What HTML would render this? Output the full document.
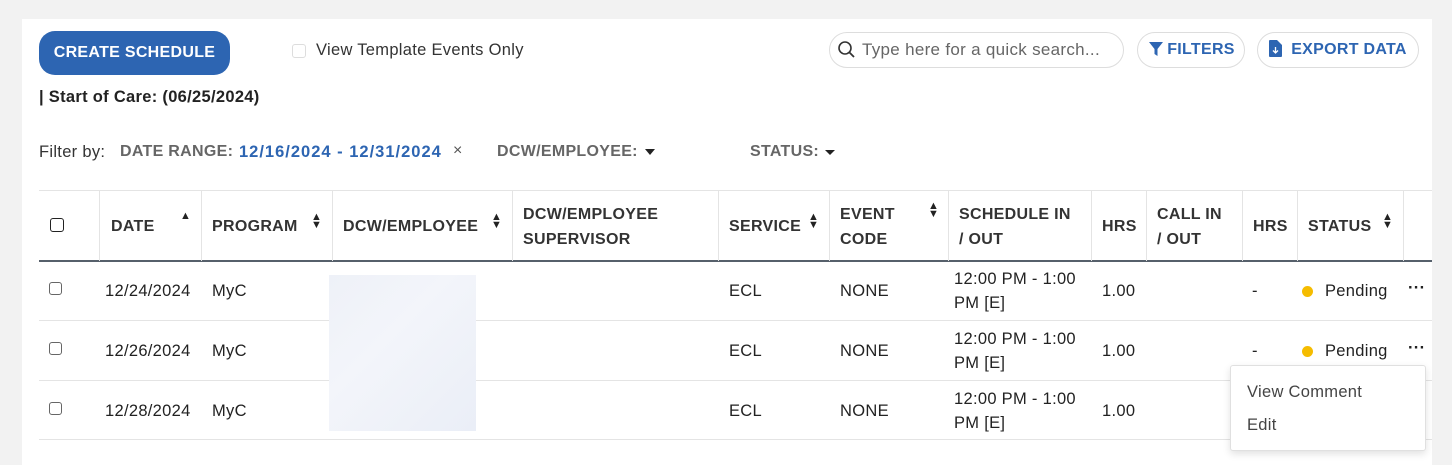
<!DOCTYPE html>
<html><head><style>
*{box-sizing:border-box;margin:0;padding:0}
body{width:1452px;height:465px;background:#f2f2f2;font-family:"Liberation Sans",sans-serif;position:relative;overflow:hidden;color:#222;letter-spacing:0.3px}
.panel{position:absolute;left:22px;top:19px;width:1410px;height:446px;background:#fff}
.a{position:absolute;white-space:nowrap}
.btn{background:#2d65b2;color:#fff;font-weight:bold;font-size:16px;border-radius:16px;text-align:center;line-height:44px}
.pill{border:1px solid #ddd;border-radius:18px;height:36px;line-height:34px;font-weight:bold;color:#2d65b2;font-size:16px;text-align:center}
.th{position:absolute;font-weight:bold;font-size:16px;color:#333;line-height:25px}
.vl{position:absolute;top:191px;width:1px;height:70px;background:#e4e4e4}
.hl{position:absolute;left:39px;width:1393px;height:1px;background:#e4e4e4}
.td{position:absolute;font-size:16.5px;color:#222;line-height:24px}
.cb{position:absolute;width:13px;height:13px;border:1px solid #666;border-radius:3px}
.dot{position:absolute;width:11px;height:11px;border-radius:50%;background:#f5bc00}
.sort{position:absolute;font-size:11px;line-height:8px;color:#222;letter-spacing:0}
</style></head><body>
<div class="panel"></div>
<div class="a btn" style="left:39px;top:31px;width:191px;height:44px">CREATE SCHEDULE</div>
<div class="a" style="left:292px;top:44px;width:14px;height:14px;border:1px solid #ddd;border-radius:3px"></div>
<div class="a" style="left:316px;top:41px;font-size:16.5px;color:#333">View Template Events Only</div>
<div class="a" style="left:39px;top:88px;font-size:16.5px;font-weight:bold;color:#222">| Start of Care: (06/25/2024)</div>
<div class="a pill" style="left:829px;top:32px;width:295px;text-align:left;padding-left:32px;font-weight:normal;color:#666;font-size:17px">Type here for a quick search...</div>
<svg class="a" style="left:837px;top:40px" width="20" height="20" viewBox="0 0 20 20"><circle cx="8" cy="8" r="6" fill="none" stroke="#333" stroke-width="1.6"/><path d="M12.5 12.5L17 17" stroke="#333" stroke-width="1.8"/></svg>
<div class="a pill" style="left:1137px;top:32px;width:108px;padding-left:20px">FILTERS</div>
<svg class="a" style="left:1149px;top:42px" width="14" height="15" viewBox="0 0 14 15"><path d="M0 0H14L8.5 7V14L5.5 12V7Z" fill="#2d65b2"/></svg>
<div class="a pill" style="left:1257px;top:32px;width:162px;padding-left:22px">EXPORT DATA</div>
<svg class="a" style="left:1269px;top:40px" width="13" height="17" viewBox="0 0 13 17"><path d="M0 1Q0 0 1 0H8L13 5V16Q13 17 12 17H1Q0 17 0 16Z" fill="#2d65b2"/><path d="M6.5 7V13M4 10.5L6.5 13L9 10.5" stroke="#fff" stroke-width="1.3" fill="none"/></svg>
<div class="a" style="left:39px;top:143px;font-size:16.5px;color:#333">Filter by:</div>
<div class="a" style="left:120px;top:143px;font-size:16px;font-weight:bold;color:#666">DATE RANGE:</div>
<div class="a" style="left:239px;top:143px;font-size:16.5px;font-weight:bold;color:#2d65b2;letter-spacing:1px">12/16/2024 - 12/31/2024</div>
<div class="a" style="left:453px;top:142px;font-size:16px;color:#555">×</div>
<div class="a" style="left:497px;top:143px;font-size:16px;font-weight:bold;color:#666">DCW/EMPLOYEE:</div>
<div class="a" style="left:645px;top:149px;border-left:5px solid transparent;border-right:5px solid transparent;border-top:6px solid #222"></div>
<div class="a" style="left:750px;top:143px;font-size:16px;font-weight:bold;color:#666">STATUS:</div>
<div class="a" style="left:825px;top:150px;border-left:5px solid transparent;border-right:5px solid transparent;border-top:5px solid #222"></div>

<div class="hl" style="top:190px"></div>
<div class="hl" style="top:260px;height:2px;background:#56606b"></div>
<div class="hl" style="top:320px"></div>
<div class="hl" style="top:380px"></div>
<div class="hl" style="top:439px"></div>
<div class="vl" style="left:99px"></div><div class="vl" style="left:201px"></div><div class="vl" style="left:332px"></div><div class="vl" style="left:512px"></div><div class="vl" style="left:718px"></div><div class="vl" style="left:829px"></div><div class="vl" style="left:948px"></div><div class="vl" style="left:1091px"></div><div class="vl" style="left:1146px"></div><div class="vl" style="left:1242px"></div><div class="vl" style="left:1297px"></div><div class="vl" style="left:1403px"></div>

<div class="cb" style="left:50px;top:218px;width:14px;height:14px;border-width:1.5px;border-color:#222"></div>
<div class="th" style="left:111px;top:214px">DATE</div>
<div class="sort" style="left:180px;top:212px">▲</div>
<div class="th" style="left:212px;top:214px">PROGRAM</div>
<div class="sort" style="left:311px;top:213px">▲<br>▼</div>
<div class="th" style="left:343px;top:214px">DCW/EMPLOYEE</div>
<div class="sort" style="left:491px;top:213px">▲<br>▼</div>
<div class="th" style="left:523px;top:202px">DCW/EMPLOYEE<br>SUPERVISOR</div>
<div class="th" style="left:729px;top:214px">SERVICE</div>
<div class="sort" style="left:808px;top:213px">▲<br>▼</div>
<div class="th" style="left:840px;top:202px">EVENT<br>CODE</div>
<div class="sort" style="left:928px;top:202px">▲<br>▼</div>
<div class="th" style="left:959px;top:202px">SCHEDULE IN<br>/ OUT</div>
<div class="th" style="left:1102px;top:214px">HRS</div>
<div class="th" style="left:1157px;top:202px">CALL IN<br>/ OUT</div>
<div class="th" style="left:1253px;top:214px">HRS</div>
<div class="th" style="left:1308px;top:214px">STATUS</div>
<div class="sort" style="left:1382px;top:213px">▲<br>▼</div>

<div class="a" style="left:329px;top:275px;width:147px;height:156px;background:linear-gradient(135deg,#eef1f8,#f3f5fa 40%,#eaeef7)"></div>

<div class="cb" style="left:49px;top:282px"></div>
<div class="td" style="left:105px;top:279px">12/24/2024</div><div class="td" style="left:212px;top:279px">MyC</div>
<div class="td" style="left:729px;top:279px">ECL</div><div class="td" style="left:840px;top:279px">NONE</div>
<div class="td" style="left:954px;top:267px">12:00 PM - 1:00<br>PM [E]</div>
<div class="td" style="left:1102px;top:279px">1.00</div><div class="td" style="left:1252px;top:279px">-</div>
<div class="dot" style="left:1302px;top:286px"></div><div class="td" style="left:1325px;top:279px">Pending</div>
<div class="td" style="left:1408px;top:276px;font-weight:bold">···</div>

<div class="cb" style="left:49px;top:342px"></div>
<div class="td" style="left:105px;top:339px">12/26/2024</div><div class="td" style="left:212px;top:339px">MyC</div>
<div class="td" style="left:729px;top:339px">ECL</div><div class="td" style="left:840px;top:339px">NONE</div>
<div class="td" style="left:954px;top:327px">12:00 PM - 1:00<br>PM [E]</div>
<div class="td" style="left:1102px;top:339px">1.00</div><div class="td" style="left:1252px;top:339px">-</div>
<div class="dot" style="left:1302px;top:346px"></div><div class="td" style="left:1325px;top:339px">Pending</div>
<div class="td" style="left:1408px;top:336px;font-weight:bold">···</div>

<div class="cb" style="left:49px;top:402px"></div>
<div class="td" style="left:105px;top:399px">12/28/2024</div><div class="td" style="left:212px;top:399px">MyC</div>
<div class="td" style="left:729px;top:399px">ECL</div><div class="td" style="left:840px;top:399px">NONE</div>
<div class="td" style="left:954px;top:387px">12:00 PM - 1:00<br>PM [E]</div>
<div class="td" style="left:1102px;top:399px">1.00</div>

<div class="a" style="left:1230px;top:365px;width:196px;height:86px;background:#fff;border:1px solid #e0e0e0;border-radius:3px;box-shadow:0 3px 8px rgba(0,0,0,.12)"></div>
<div class="td" style="left:1247px;top:380px;color:#444">View Comment</div>
<div class="td" style="left:1247px;top:413px;color:#444">Edit</div>
</body></html>
